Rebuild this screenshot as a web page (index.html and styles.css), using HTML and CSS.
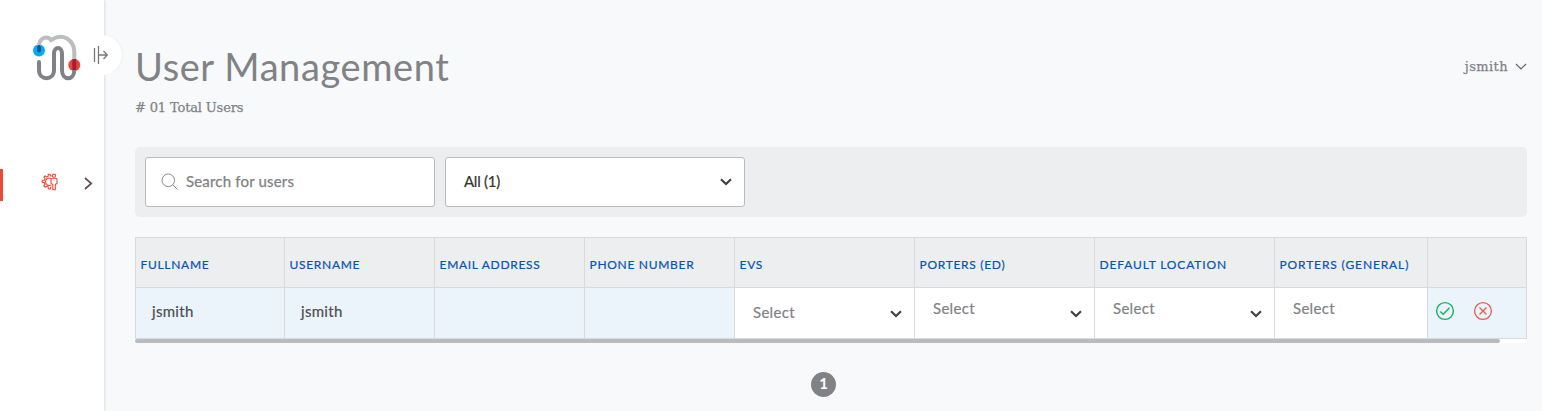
FILE: index.html
```html
<!DOCTYPE html>
<html lang="en">
<head>
<meta charset="utf-8">
<title>User Management</title>
<link rel="stylesheet" href="styles.css">
</head>
<body>
<div class="app">
  <aside class="sidebar">
    <svg class="logo" viewBox="0 0 50 48" width="50" height="48" fill="none">
      <circle cx="7" cy="16.500" r="6" fill="#00aeef"/>
      <circle cx="42.300" cy="31" r="6" fill="#ef4237"/>
      <path d="M7 16V12C7 5.500 12 2.500 16.500 4Q18 4.500 19 6C24 2.500 30 2 35 4.500Q42.300 9 42.300 18V27" stroke="#bcbdc0" stroke-width="4"/>
      <path d="M7 28V36C7 47 22 47 22 36V20C22 12 30 12 30 20V36C30 47 42.300 47 42.300 36V32" stroke="#808285" stroke-width="4" stroke-linecap="round"/>
      <path d="M7 13V16.500" stroke="#0054a6" stroke-width="4" stroke-linecap="round"/>
      <path d="M42.300 25V36" stroke="#a71e32" stroke-width="4"/>
    </svg>
    <div class="toggle">
      <svg viewBox="0 0 16 20" width="16" height="20" fill="none" stroke="#77787b" stroke-width="1.300"><path d="M1.500 3V17M5.500 1V19M6 10H14M10.500 6L14.300 10L10.500 14"/></svg>
    </div>
    <nav class="nav-item">
      <svg class="nav-icon" viewBox="0 0 18 18" width="18" height="18" fill="none" stroke="#e94b38" stroke-width="1.100" stroke-linejoin="round">
        <path d="M10.800 2.700L9.200 3V1.200H7.200V3.300L5.600 4L4.200 2.800L2.900 4.300L4.100 5.700L3.500 7.200H1.200V9.500H3.300L4 11.200L2.700 12.900L4.200 14.300L5.800 13.200L7.300 13.900V16H9.400V14.200L10.500 14"/>
        <path d="M10 5.500A3.700 3.700 0 1 0 10 12"/>
        <circle cx="13" cy="2.700" r="1.600"/>
        <path d="M11.800 16.800V11.500L10 10.500V6.300Q10 5.200 11.300 5.200H14.700Q16 5.200 16 6.300V10.500L14.300 11.500V16.800Z"/>
      </svg>
      <svg class="nav-arrow" viewBox="0 0 9 13" width="9" height="13" fill="none" stroke="#5d5050" stroke-width="1.700"><path d="M1 1L7.300 6.500L1 12"/></svg>
    </nav>
  </aside>
  <main class="content">
    <header class="page-head">
      <div>
        <h1 class="title">User Management</h1>
        <p class="subtitle"># 01 Total Users</p>
      </div>
      <div class="account"><span class="account-name">jsmith</span><svg viewBox="0 0 12 7" width="12" height="7" fill="none" stroke="#636466" stroke-width="1.200"><path d="M1 1L6 6L11 1"/></svg></div>
    </header>
    <section class="filters">
      <div class="field search">
        <svg viewBox="0 0 18 18" width="18" height="18" fill="none" stroke="#8a8b8d"><circle cx="7.300" cy="7.300" r="6.300"/><path d="M11.800 11.800L16.500 16.500"/></svg>
        <span class="placeholder">Search for users</span>
      </div>
      <div class="field select"><span class="selected">All (1)</span><svg class="chevron" viewBox="0 0 12 8" width="12" height="8"><path d="M1 1.200L6 6L11 1.200"/></svg></div>
    </section>
    <div class="grid">
      <div class="th">FULLNAME</div>
      <div class="th">USERNAME</div>
      <div class="th">EMAIL ADDRESS</div>
      <div class="th">PHONE NUMBER</div>
      <div class="th">EVS</div>
      <div class="th">PORTERS (ED)</div>
      <div class="th wide">DEFAULT LOCATION</div>
      <div class="th wide">PORTERS (GENERAL)</div>
      <div class="th"></div>
      <div class="td name">jsmith</div>
      <div class="td name">jsmith</div>
      <div class="td"></div>
      <div class="td"></div>
      <div class="td pick low"><span>Select</span><svg class="chevron" viewBox="0 0 12 8" width="12" height="8"><path d="M1 1.200L6 6L11 1.200"/></svg></div>
      <div class="td pick"><span>Select</span><svg class="chevron" viewBox="0 0 12 8" width="12" height="8"><path d="M1 1.200L6 6L11 1.200"/></svg></div>
      <div class="td pick"><span>Select</span><svg class="chevron" viewBox="0 0 12 8" width="12" height="8"><path d="M1 1.200L6 6L11 1.200"/></svg></div>
      <div class="td pick"><span>Select</span></div>
      <div class="td actions">
        <svg viewBox="0 0 20 20" width="20" height="20" fill="none" stroke="#12b25f" stroke-width="1.400"><circle cx="10" cy="10" r="8.400"/><path d="M5.300 10.500L8.200 13.200L14.500 6.800"/></svg>
        <svg viewBox="0 0 20 20" width="20" height="20" fill="none" stroke="#e85a4c" stroke-width="1.300"><circle cx="10" cy="10" r="8.400"/><path d="M6.500 6.500L13.500 13.500M13.500 6.500L6.500 13.500"/></svg>
      </div>
    </div>
    <div class="scroll"><div class="thumb"></div></div>
    <div class="pager"><span class="page">1</span></div>
  </main>
</div>
</body>
</html>
```
FILE: styles.css
```css
* { box-sizing: border-box; }
body { margin: 0; background: #f8f9fb; font-family: Lato, sans-serif; font-size: 15px; color: #808285; overflow: hidden; }
.app { display: flex; height: 411px; }
.sidebar { position: relative; width: 104px; flex: none; background: #fff; box-shadow: 0 0 3px rgba(0,0,0,.2); padding-top: 34px; }
.logo { display: block; margin-left: 32px; }
.toggle { position: absolute; left: 82px; top: 35px; width: 40px; height: 40px; border-radius: 50%; background: #fff; box-shadow: 1px 0 2px -1px rgba(0,0,0,.14); display: flex; align-items: center; padding-left: 11px; }
.nav-item { display: flex; align-items: center; height: 32px; margin-top: 87px; border-left: 3px solid #e94b38; border-radius: 0 2px 2px 0; padding-left: 38px; }
.nav-icon { margin-top: -6px; }
.nav-arrow { margin: -4px 0 0 25px; }
.content { width: 1392px; margin-left: 31px; }
.page-head { display: flex; justify-content: space-between; height: 147px; padding-top: 42px; }
.title { margin: 0; font-weight: 400; font-size: 38px; line-height: 48px; letter-spacing: .6px; }
.subtitle { margin: 9px 0 0; font: 13px/18px "DejaVu Serif", serif; letter-spacing: -.15px; -webkit-text-stroke: .25px; }
.account { display: flex; align-items: center; gap: 7px; height: 49px; }
.account-name { font: 13px/18px "DejaVu Serif", serif; letter-spacing: .4px; -webkit-text-stroke: .25px; }
.filters { display: flex; gap: 10px; height: 70px; padding: 10px; border-radius: 5px; background: #edeef0; }
.field { display: flex; align-items: center; height: 50px; background: #fff; border: 1px solid #b9bbbe; border-radius: 3px; }
.search { width: 290px; padding-left: 15px; gap: 7px; }
.placeholder { padding-bottom: 2px; letter-spacing: .18px; -webkit-text-stroke: .25px; }
.select { width: 300px; justify-content: space-between; padding: 0 12px 0 18px; }
.selected { color: #333; padding-bottom: 2px; letter-spacing: -.25px; -webkit-text-stroke: .2px; }
.chevron { fill: none; stroke: #414042; stroke-width: 2.200; }
.grid { display: grid; grid-template-columns: 149px 150px 150px 150px 180px 180px 180px 153px 99px; grid-template-rows: 50px 51px; width: 1392px; margin-top: 20px; border: solid #d9dadd; border-width: 1px 0 0 1px; }
.th, .td { border: solid #d9dadd; border-width: 0 1px 1px 0; }
.th { background: #edeef0; color: #0753b4; font-size: 12px; line-height: 16px; letter-spacing: .7px; padding: 19px 0 0 4.500px; white-space: nowrap; -webkit-text-stroke: .2px; }
.wide { letter-spacing: .87px; }
.td { background: #ebf4fa; letter-spacing: .3px; -webkit-text-stroke: .2px; }
.name { color: #4c4d4f; line-height: 20px; padding: 13px 16px; }
.pick { display: flex; justify-content: space-between; align-items: flex-start; background: #fff; line-height: 20px; padding: 10px 12px 0 18px; }
.pick .chevron { margin-top: 12px; }
.low { padding-top: 14px; }
.low .chevron { margin-top: 8px; }
.actions { display: flex; gap: 18px; padding: 13px 0 0 7px; }
.scroll { height: 4px; background: #fff; }
.thumb { width: 1365px; height: 4px; border-radius: 2px; background: #b9bbbd; }
.pager { display: flex; justify-content: center; margin-top: 29px; padding-right: 15px; }
.page { width: 25px; height: 25px; border-radius: 50%; background: #808285; color: #fff; font-weight: 700; font-size: 15px; line-height: 23px; text-align: center; }
```
